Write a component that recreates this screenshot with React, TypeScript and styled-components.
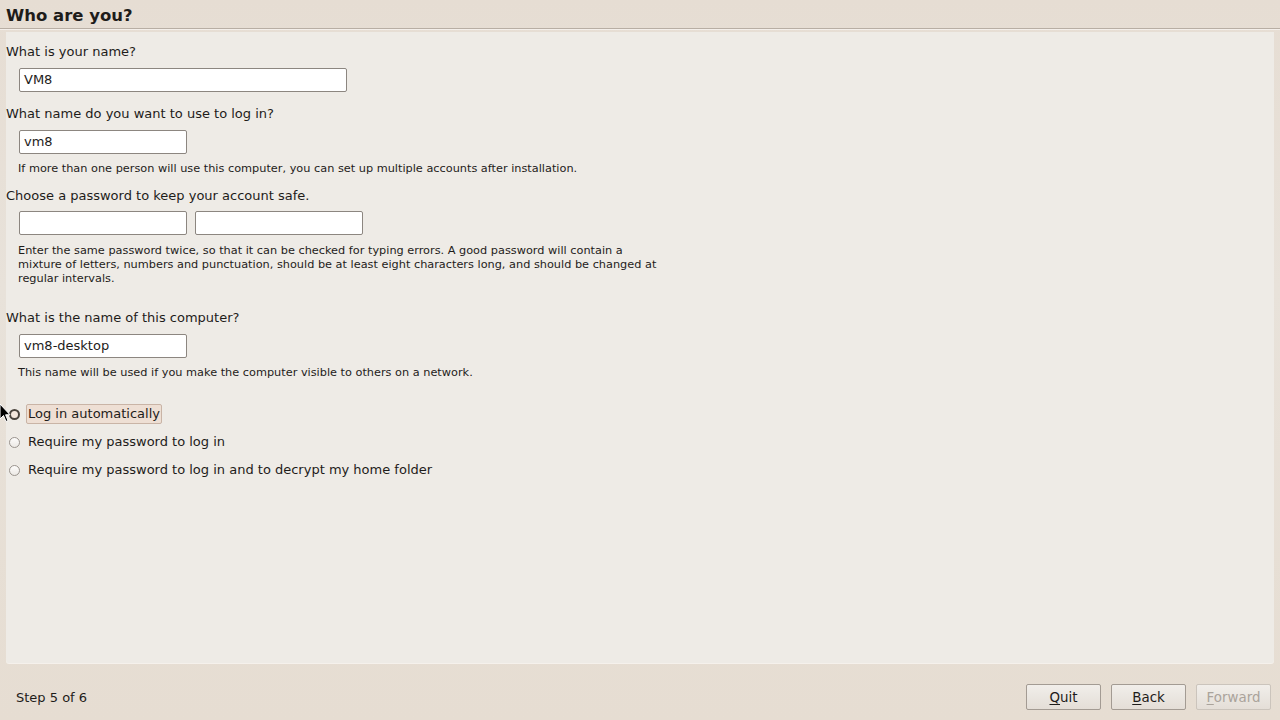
import React from 'react';
import styled, { createGlobalStyle } from 'styled-components';

const Global = createGlobalStyle`
  html, body { margin: 0; padding: 0; }
  body {
    width: 1280px;
    height: 720px;
    overflow: hidden;
    background: #e6ded5;
    font-family: "DejaVu Sans", "Liberation Sans", sans-serif;
    color: #1e1c1a;
  }
`;

const Window = styled.div`
  position: relative;
  width: 1280px;
  height: 720px;
  display: flex;
  flex-direction: column;
  background: linear-gradient(#e6ddd3, #e8e2da 40%, #e6ddd2);
`;

const Title = styled.h1`
  margin: 0;
  height: 29px;
  padding: 0 6px;
  box-sizing: border-box;
  font-size: 16.5px;
  font-weight: bold;
  line-height: 31px;
  border-bottom: 1px solid #b8aea4;
  box-shadow: 0 1px 0 #f4efea;
`;

const Panel = styled.div`
  margin: 3px 6px 0 6px;
  height: 631px;
  background: #eeebe6;
  border-radius: 0 0 3px 3px;
  box-shadow: 0 1px 0 #f5f1ec;
  display: flex;
  flex-direction: column;
  padding-top: 11px;
  box-sizing: border-box;
`;

const Label = styled.div<{ $top?: number }>`
  font-size: 13px;
  line-height: 18px;
  margin-top: ${p => p.$top ?? 0}px;
`;

const Row = styled.div<{ $top?: number }>`
  display: flex;
  gap: 8px;
  padding-left: 13px;
  margin-top: ${p => p.$top ?? 0}px;
`;

const Field = styled.div<{ $w: number }>`
  width: ${p => p.$w}px;
  height: 24px;
  box-sizing: border-box;
  background: #ffffff;
  border: 1px solid #8c8680;
  border-radius: 2px;
  font-size: 13px;
  line-height: 22px;
  padding-left: 4px;
`;

const Hint = styled.div<{ $top?: number }>`
  margin-left: 12px;
  font-size: 11.3px;
  line-height: 14px;
  margin-top: ${p => p.$top ?? 0}px;
  width: 648px;
`;

const Options = styled.div`
  display: flex;
  flex-direction: column;
  gap: 8px;
  margin-top: 24px;
`;

const Option = styled.div`
  display: flex;
  align-items: center;
  height: 20px;
`;

const Radio = styled.span<{ $on?: boolean }>`
  width: 11px;
  height: 11px;
  margin-left: 3px;
  margin-right: 8px;
  border-radius: 50%;
  box-sizing: border-box;
  border: ${p => (p.$on ? '2.5px solid #4a433d' : '1px solid #9a948e')};
  background: ${p => (p.$on ? '#f3e6dc' : 'linear-gradient(#fdfcfb, #ece9e5)')};
`;

const OptionText = styled.span<{ $focus?: boolean }>`
  font-size: 13px;
  line-height: 18px;
  padding: 0 1px;
  margin-left: -2px;
  border: 1px solid ${p => (p.$focus ? '#c9b4a6' : 'transparent')};
  border-radius: 2px;
  background: ${p => (p.$focus ? '#eedfd4' : 'transparent')};
`;

const Footer = styled.div`
  flex: 1;
  display: flex;
  align-items: center;
  padding: 11px 9px 0 16px;
`;

const Step = styled.div`
  font-size: 13px;
  flex: 1;
`;

const Buttons = styled.div`
  display: flex;
  gap: 10px;
`;

const Button = styled.div<{ $disabled?: boolean }>`
  width: 75px;
  height: 26px;
  box-sizing: border-box;
  border: 1px solid ${p => (p.$disabled ? '#cbc4bc' : '#a39b93')};
  border-radius: 2px;
  background: linear-gradient(#f1eeea, #e4ded7);
  display: flex;
  align-items: center;
  justify-content: center;
  font-size: 13.4px;
  color: ${p => (p.$disabled ? '#aaa39b' : '#1e1c1a')};
  u { text-decoration-thickness: 1px; text-underline-offset: 2px; }
`;

const Cursor = styled.svg`
  position: absolute;
  left: -1px;
  top: 403px;
`;

export default function App() {
  return (
    <Window>
      <Global />
      <Title>Who are you?</Title>
      <Panel>
        <Label>What is your name?</Label>
        <Row $top={7}>
          <Field $w={328}>VM8</Field>
        </Row>
        <Label $top={13}>What name do you want to use to log in?</Label>
        <Row $top={7}>
          <Field $w={168}>vm8</Field>
        </Row>
        <Hint $top={8}>If more than one person will use this computer, you can set up multiple accounts after installation.</Hint>
        <Label $top={11}>Choose a password to keep your account safe.</Label>
        <Row $top={6}>
          <Field $w={168} />
          <Field $w={168} />
        </Row>
        <Hint $top={9}>
          Enter the same password twice, so that it can be checked for typing errors. A good password will contain a
          mixture of letters, numbers and punctuation, should be at least eight characters long, and should be changed at
          regular intervals.
        </Hint>
        <Label $top={23}>What is the name of this computer?</Label>
        <Row $top={7}>
          <Field $w={168}>vm8-desktop</Field>
        </Row>
        <Hint $top={8}>This name will be used if you make the computer visible to others on a network.</Hint>
        <Options>
          <Option>
            <Radio $on />
            <OptionText $focus>Log in automatically</OptionText>
          </Option>
          <Option>
            <Radio />
            <OptionText>Require my password to log in</OptionText>
          </Option>
          <Option>
            <Radio />
            <OptionText>Require my password to log in and to decrypt my home folder</OptionText>
          </Option>
        </Options>
      </Panel>
      <Footer>
        <Step>Step 5 of 6</Step>
        <Buttons>
          <Button><span><u>Q</u>uit</span></Button>
          <Button><span><u>B</u>ack</span></Button>
          <Button $disabled><span><u>F</u>orward</span></Button>
        </Buttons>
      </Footer>
      <Cursor width="12" height="20" viewBox="0 0 12 20">
        <path d="M1 1 L1 16 L4.5 12.5 L7 18.5 L9 17.6 L6.6 11.8 L11 11.8 Z" fill="#000" stroke="#fff" strokeWidth="1" />
      </Cursor>
    </Window>
  );
}
